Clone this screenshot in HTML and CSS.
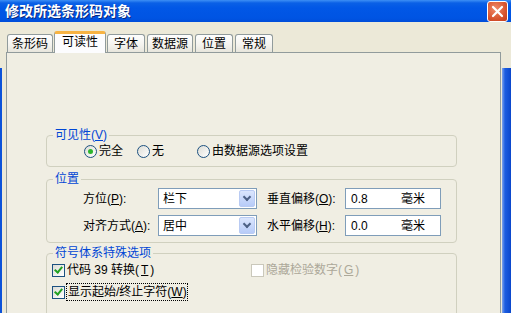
FILE: index.html
```html
<!DOCTYPE html>
<html lang="zh-CN">

<head>
    <meta charset="UTF-8">
    <title>修改所选条形码对象</title>
    <link rel="stylesheet" href="styles.css">
</head>

<body>
    <div class="window">
        <div class="titlebar">
            <span class="title">修改所选条形码对象</span>
            <div class="close">
                <svg width="19" height="19" viewBox="0 0 19 19">
                    <path d="M5 5 L14 14 M14 5 L5 14" stroke="#fff" stroke-width="2.2" stroke-linecap="round" />
                </svg>
            </div>
        </div>

        <div class="client">
            <div class="tabs">
                <div class="tab">条形码</div>
                <div class="tab tab-active">可读性</div>
                <div class="tab">字体</div>
                <div class="tab">数据源</div>
                <div class="tab">位置</div>
                <div class="tab">常规</div>
            </div>

            <div class="panel">
                <fieldset class="group">
                    <legend>可见性(<u>V</u>)</legend>
                    <div class="radios">
                        <label class="radio"><span class="radio-dot checked"></span>完全</label>
                        <label class="radio"><span class="radio-dot"></span>无</label>
                        <label class="radio"><span class="radio-dot"></span>由数据源选项设置</label>
                    </div>
                </fieldset>

                <fieldset class="group group-pos">
                    <legend>位置</legend>
                    <div class="pos-grid">
                        <span class="lbl">方位(<u>P</u>):</span>
                        <div class="select"><span>栏下</span><span class="select-btn"></span></div>
                        <span class="lbl lbl-right">垂直偏移(<u>O</u>):</span>
                        <div class="textbox"><span class="tb-value">0.8</span><span>毫米</span></div>

                        <span class="lbl">对齐方式(<u>A</u>):</span>
                        <div class="select"><span>居中</span><span class="select-btn"></span></div>
                        <span class="lbl lbl-right">水平偏移(<u>H</u>):</span>
                        <div class="textbox"><span class="tb-value">0.0</span><span>毫米</span></div>
                    </div>
                </fieldset>

                <fieldset class="group group-symb">
                    <legend>符号体系特殊选项</legend>
                    <div class="check-grid">
                        <label class="check"><span class="box checked"></span>代码 39 转换(<u>T</u>)</label>
                        <label class="check disabled"><span class="box"></span>隐藏检验数字(<u>G</u>)</label>
                        <label class="check"><span class="box checked"></span><span class="focus">显示起始/终止字符(<u>W</u>)</span></label>
                    </div>
                </fieldset>
            </div>
        </div>
    </div>
</body>

</html>
```
FILE: styles.css
```css
* {
    box-sizing: border-box;
}

body {
    margin: 0;
    font-family: 'Liberation Sans', 'Noto Sans CJK SC', sans-serif;
    font-size: 12px;
    line-height: 14px;
    color: #000;
}

u {
    text-decoration: underline;
    text-underline-offset: 1px;
}

.window {
    display: flex;
    flex-direction: column;
    width: 511px;
    height: 313px;
    overflow: hidden;
}

.titlebar {
    display: flex;
    align-items: center;
    justify-content: space-between;
    height: 26px;
    padding: 0 3px 0 5px;
    background: linear-gradient(#3d8ff5 0, #0a60e6 3px, #0157e6 8px, #0054e3 18px, #0047d0 26px);
}

.title {
    color: #fff;
    font-weight: bold;
    font-size: 14px;
    text-shadow: 1px 1px 0 #0a2a80;
}

.close {
    display: flex;
    align-items: center;
    justify-content: center;
    width: 21px;
    height: 21px;
    margin-top: 1px;
    border: 1px solid #fff;
    border-radius: 3px;
    background: radial-gradient(circle at 40% 35%, #f08a6a, #d8552f 60%, #c13c1d);
}

.client {
    flex: 1;
    padding: 9px 10px 0 6px;
    background:
        linear-gradient(#0c52d9, #0c52d9) left 0 top 46px / 2px 100% no-repeat,
        linear-gradient(to right, #7fa5ec, #1c5de0 3px, #0a47cc) right 0 top 46px / 9px 100% no-repeat,
        #ece9d8;
}

.tabs {
    display: flex;
    align-items: flex-end;
    gap: 2px;
    height: 21px;
    padding-left: 1px;
    position: relative;
    z-index: 1;
}

.tab {
    display: flex;
    align-items: center;
    justify-content: center;
    min-width: 38px;
    height: 18px;
    padding: 0 4px;
    border: 1px solid #919b9c;
    border-bottom: none;
    border-radius: 3px 3px 0 0;
    background: linear-gradient(#fefefe, #f4f3ee 60%, #e7e5dc);
}

.tab-active {
    height: 22px;
    margin: 0 -1px -1px -1px;
    padding: 0 7px 3px;
    border-top: 3px solid #f7b343;
    background: #fcfcfe;
}

.panel {
    height: 300px;
    padding: 75px 43px 0 39px;
    border: 1px solid #919b9c;
    background: #f0eee3;
}

.group {
    margin: 0;
    padding: 0;
    min-width: 0;
    border: 1px solid #d0d0bf;
    border-radius: 4px;
}

.group legend {
    margin-left: 6px;
    padding: 0 2px;
    color: #0046d5;
}

.radios {
    display: grid;
    grid-template-columns: 53px 60px auto;
    padding: 2px 0 8px 37px;
}

.radio {
    display: flex;
    align-items: center;
    gap: 2px;
}

.radio-dot {
    display: flex;
    align-items: center;
    justify-content: center;
    width: 13px;
    height: 13px;
    border: 1px solid #1c5180;
    border-radius: 50%;
    background: linear-gradient(135deg, #dcdcd5, #fff);
}

.radio-dot.checked::after {
    content: "";
    width: 5px;
    height: 5px;
    border-radius: 50%;
    background: #2cb52c;
}

.group-pos {
    margin-top: 5px;
}

.pos-grid {
    display: grid;
    grid-template-columns: 75px 99px 88px 96px;
    grid-auto-rows: 21px;
    row-gap: 6px;
    align-items: center;
    padding: 2px 0 6px 36px;
}

.lbl-right {
    padding-left: 10px;
}

.select {
    display: flex;
    align-items: center;
    justify-content: space-between;
    height: 21px;
    padding: 1px 1px 1px 4px;
    border: 1px solid #7f9db9;
    background: #fff;
}

.select-btn {
    display: flex;
    align-items: center;
    justify-content: center;
    width: 16px;
    height: 100%;
    border: 1px solid #b9cbf3;
    border-radius: 2px;
    background: linear-gradient(#dbe6fd, #b7cbf8);
}

.select-btn::after {
    content: "";
    width: 4px;
    height: 4px;
    margin-top: -3px;
    border-right: 2px solid #4d6185;
    border-bottom: 2px solid #4d6185;
    transform: rotate(45deg);
}

.textbox {
    display: flex;
    align-items: center;
    height: 21px;
    padding-left: 5px;
    border: 1px solid #7f9db9;
    background: #fff;
}

.tb-value {
    width: 50px;
}

.group-symb {
    margin-top: 3px;
}

.check-grid {
    display: grid;
    grid-template-columns: 199px auto;
    row-gap: 7px;
    padding: 3px 0 30px 5px;
}

.check {
    display: flex;
    align-items: center;
    gap: 2px;
}

.box {
    display: flex;
    align-items: center;
    justify-content: center;
    width: 13px;
    height: 13px;
    border: 1px solid #1c5180;
    background: linear-gradient(135deg, #dcdcd5, #fff);
}

.box.checked::after {
    content: "";
    width: 3px;
    height: 6px;
    margin-top: -2px;
    border-right: 2px solid #21a121;
    border-bottom: 2px solid #21a121;
    transform: rotate(40deg);
}

.check.disabled {
    color: #aca899;
}

.check.disabled .box {
    border-color: #cac8bb;
    background: #fff;
}

.focus {
    padding: 1px 0 1px 1px;
    outline: 1px dotted #000;
}
```
